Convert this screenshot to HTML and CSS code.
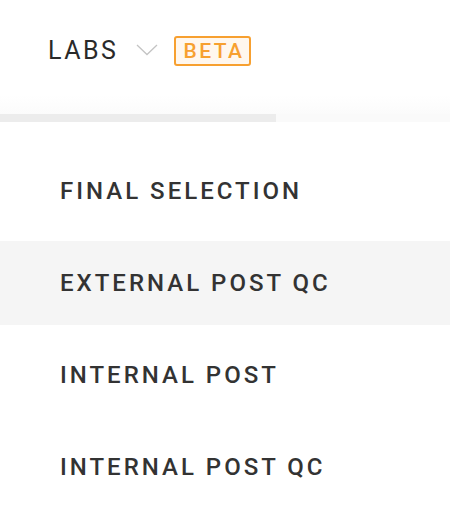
FILE: index.html
```html
<!DOCTYPE html>
<html>
<head>
<meta charset="utf-8">
<link rel="stylesheet" href="styles.css">
</head>
<body>
<div class="page">
  <header class="header">
    <span class="labs">LABS</span>
    <svg class="chevron" width="22" height="12" viewBox="0 0 22 12"><path d="M1 1 L11 10.5 L21 1" fill="none" stroke="#c4c4c4" stroke-width="1.3"/></svg>
    <span class="beta">BETA</span>
  </header>
  <div class="fade"></div>
  <div class="track"><div class="track-fill"></div></div>
  <ul class="menu">
    <li class="item">FINAL SELECTION</li>
    <li class="item active">EXTERNAL POST QC</li>
    <li class="item">INTERNAL POST</li>
    <li class="item">INTERNAL POST QC</li>
  </ul>
</div>
</body>
</html>
```
FILE: styles.css
```css
* { box-sizing: border-box; }
html, body { margin: 0; padding: 0; background: #fff; }
body { font-family: Roboto, "Noto Sans", sans-serif; color: #333; }
.page { width: 450px; height: 526px; overflow: hidden; }
.header {
  height: 95px;
  display: flex;
  align-items: center;
  padding-left: 48px;
  padding-top: 6px;
}
.labs {
  font-size: 25px;
  font-weight: 400;
  letter-spacing: 2.5px;
  color: #2a2a2a;
  margin-right: 18px;
}
.chevron { margin-right: 16px; margin-top: -2px; }
.beta {
  font-size: 21px;
  font-weight: 500;
  letter-spacing: 2.5px;
  color: #f7a030;
  background: #fff7ee;
  border: 2px solid #f7a030;
  border-radius: 3px;
  padding: 1px 4px 1px 7px;
  line-height: 24px;
}
.fade {
  height: 19px;
  background: linear-gradient(#ffffff, #fbfbfb);
}
.track {
  height: 8px;
  background: #fafafa;
}
.track-fill {
  width: 276px;
  height: 8px;
  background: #ececec;
}
.menu {
  list-style: none;
  margin: 0;
  padding: 27px 0 0;
  display: flex;
  flex-direction: column;
  gap: 8px;
}
.item {
  height: 84px;
  display: flex;
  align-items: center;
  padding-left: 60px;
  font-size: 24px;
  font-weight: 500;
  letter-spacing: 3px;
  color: #333;
}
.item.active { background: #f5f5f5; }
```
